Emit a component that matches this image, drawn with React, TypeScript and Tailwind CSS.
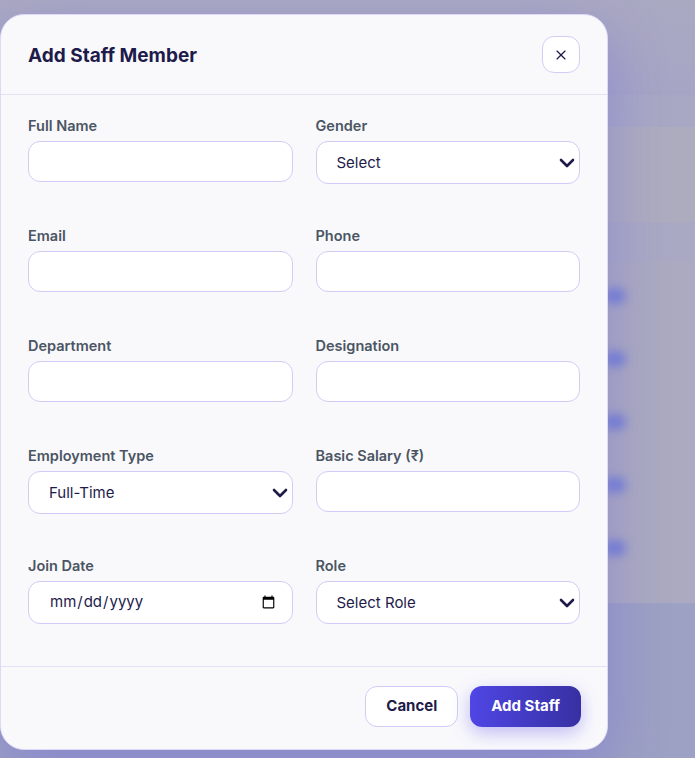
import { X, ChevronDown } from 'lucide-react';

const inputCls =
  'w-full h-[41px] rounded-[12px] border border-[#cfcdf7] bg-white px-5 text-[15px] text-[#1e1b4b] outline-none focus:border-[#6d63e8]';

function Field({ label, children }: { label: string; children: React.ReactNode }) {
  return (
    <div className="h-[110px]">
      <label className="block text-[14.5px] leading-5 font-semibold text-[#4b5563] mb-[5px]">{label}</label>
      {children}
    </div>
  );
}

function Select({ value, options }: { value: string; options: string[] }) {
  return (
    <div className="relative">
      <select
        defaultValue={value}
        className="w-full h-[43px] appearance-none rounded-[12px] border border-[#cfcdf7] bg-white pl-5 pr-8 pt-[2px] text-[15px] text-[#1e1b4b] outline-none"
      >
        {options.map((o) => (
          <option key={o}>{o}</option>
        ))}
      </select>
      <ChevronDown
        size={24}
        strokeWidth={2.6}
        className="pointer-events-none absolute right-[1px] top-1/2 -translate-y-1/2 text-[#1e1b4b]"
      />
    </div>
  );
}

// faded page sitting behind the dialog overlay
function BackdropPage() {
  const dots = [295, 358, 423, 487, 551];
  return (
    <div className="h-[758px] flex flex-col bg-[#a9a9c2]">
      <div className="h-[95px] bg-gradient-to-b from-[#aaa9c2] to-[#a6a5c5]" />
      <div className="h-[32px] bg-[#a8a8c4]" />
      <div className="h-[95px] bg-[#adacbf]" />
      <div className="h-[40px] bg-[#a9a9c3]" />
      <div className="flex-1 bg-[#abaac0] flex flex-col items-start pl-[604px] pt-[26px] gap-[47px]">
        {dots.map((d) => (
          <div key={d} className="w-[22px] h-[16px] rounded-full bg-[#6f7bd6] blur-[5px] opacity-80" />
        ))}
      </div>
      <div className="h-[155px] bg-[#9da1c3]" />
    </div>
  );
}

export default function App() {
  return (
    <div className="relative w-[695px] h-[758px] overflow-hidden" style={{ fontFamily: 'Inter, "Noto Sans", sans-serif' }}>
      <BackdropPage />

      <div className="absolute left-0 top-[14px] w-[608px] rounded-[24px] border border-[#dcdaf6] bg-[#f9f9fc] shadow-[0_20px_60px_rgba(79,70,229,0.28)]">
        <div className="flex items-center justify-between px-[27px] py-[21px] border-b border-[#e4e2f4]">
          <h2 className="pt-1 text-[19px] font-bold text-[#1e1b4b]">Add Staff Member</h2>
          <button className="w-[38px] h-[37px] flex items-center justify-center rounded-[12px] border border-[#d0cef7] bg-white text-[#1e1b4b]">
            <X size={16} strokeWidth={1.75} />
          </button>
        </div>

        <div className="grid grid-cols-2 gap-x-[23px] px-[27px] pt-[21px]">
          <Field label="Full Name">
            <input type="text" className={inputCls} />
          </Field>
          <Field label="Gender">
            <Select value="Select" options={['Select', 'Male', 'Female', 'Other']} />
          </Field>
          <Field label="Email">
            <input type="email" className={inputCls} />
          </Field>
          <Field label="Phone">
            <input type="tel" className={inputCls} />
          </Field>
          <Field label="Department">
            <input type="text" className={inputCls} />
          </Field>
          <Field label="Designation">
            <input type="text" className={inputCls} />
          </Field>
          <Field label="Employment Type">
            <Select value="Full-Time" options={['Full-Time', 'Part-Time', 'Contract']} />
          </Field>
          <Field label="Basic Salary (₹)">
            <input type="number" className={inputCls} />
          </Field>
          <Field label="Join Date">
            <input
              type="date"
              className="w-full h-[43px] rounded-[12px] border border-[#cfcdf7] bg-white pl-5 pr-[14px] text-[15px] text-[#1e1b4b] outline-none"
            />
          </Field>
          <Field label="Role">
            <Select value="Select Role" options={['Select Role', 'Admin', 'Staff']} />
          </Field>
        </div>

        <div className="flex justify-end gap-3 pl-7 pr-[26px] pt-[19px] pb-[22px] border-t border-[#e4e2f4]">
          <button className="h-[41px] px-5 rounded-[12px] border border-[#cfcdf7] bg-white text-[15px] font-bold text-[#1e1b4b]">
            Cancel
          </button>
          <button className="h-[41px] px-[21px] rounded-[12px] bg-gradient-to-r from-[#4f46e5] to-[#3730a3] text-[15px] font-bold text-white shadow-[0_6px_18px_rgba(79,70,229,0.35)]">
            Add Staff
          </button>
        </div>
      </div>
    </div>
  );
}
